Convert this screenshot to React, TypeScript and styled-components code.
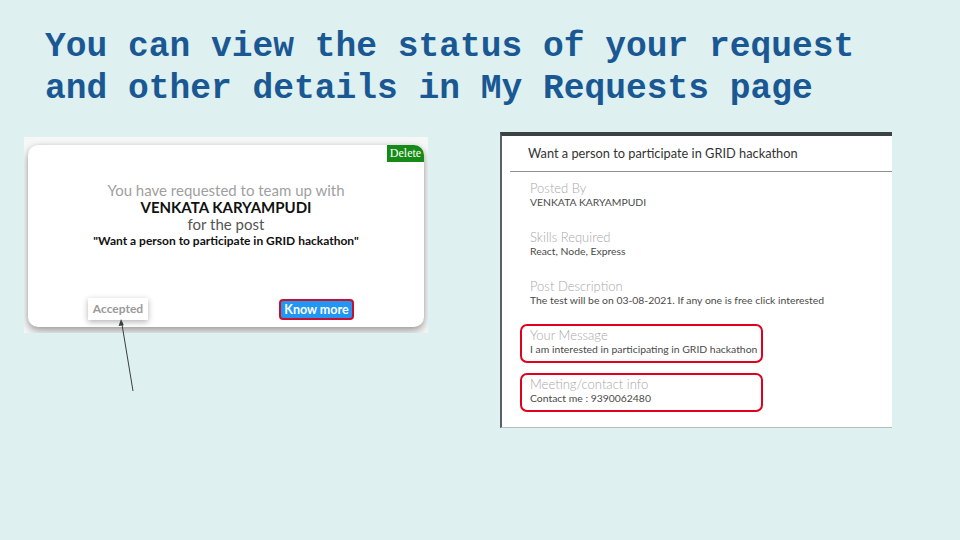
import React from "react";
import styled, { createGlobalStyle } from "styled-components";

const GlobalStyle = createGlobalStyle`
  html, body {
    margin: 0;
    padding: 0;
    background: #def0f0;
  }
  body {
    width: 960px;
    height: 540px;
    overflow: hidden;
    font-family: Lato, "Open Sans", sans-serif;
  }
`;

const Slide = styled.div`
  position: relative;
  width: 960px;
  height: 540px;
  background: #def0f0;
`;

const Title = styled.h1`
  margin: 0;
  padding: 26px 0 0 45px;
  font-family: "Liberation Mono", "Courier New", monospace;
  font-weight: bold;
  font-size: 34.6px;
  line-height: 42px;
  color: #1a5893;
  white-space: pre;
`;

const Row = styled.div`
  display: flex;
  align-items: flex-start;
  gap: 72px;
  padding: 22px 0 0 24px;
`;

/* ---- left screenshot ---- */

const Shot = styled.div`
  margin-top: 5px;
  width: 404px;
  box-sizing: border-box;
  padding: 8px 4px 6px 4px;
  background: #f6f7f7;
  overflow: hidden;
`;

const RequestCard = styled.div`
  display: flex;
  flex-direction: column;
  height: 182px;
  background: #fff;
  border-radius: 10px;
  box-shadow: 0 4px 8px rgba(0, 0, 0, 0.35), 0 0 4px rgba(0, 0, 0, 0.08);
  overflow: hidden;
`;

const CardTop = styled.div`
  display: flex;
  justify-content: flex-end;
`;

const DeleteButton = styled.div`
  width: 37px;
  height: 17px;
  background: #158a16;
  color: #fff;
  font-family: "Liberation Serif", "Times New Roman", serif;
  font-size: 12px;
  line-height: 17px;
  text-align: center;
`;

const Message = styled.div`
  margin-top: 19px;
  display: flex;
  flex-direction: column;
  align-items: center;
  text-align: center;
`;

const Line = styled.div<{ $size: number; $height: number; $color: string; $bold?: boolean }>`
  font-size: ${({ $size }) => $size}px;
  line-height: ${({ $height }) => $height}px;
  color: ${({ $color }) => $color};
  font-weight: ${({ $bold }) => ($bold ? 700 : 400)};
  white-space: nowrap;
`;

const Actions = styled.div`
  margin-top: auto;
  display: flex;
  justify-content: space-between;
  align-items: center;
  padding: 0 70px 7px 60px;
`;

const Status = styled.div`
  width: 60px;
  height: 22px;
  background: #fff;
  box-shadow: 0 2px 6px rgba(0, 0, 0, 0.3);
  color: #9a9a9a;
  font-size: 12px;
  font-weight: 700;
  line-height: 22px;
  text-align: center;
`;

const KnowMore = styled.div`
  width: 75px;
  height: 21px;
  box-sizing: border-box;
  background: #2196f3;
  border: 2px solid #c8102e;
  border-radius: 4px;
  color: #fff;
  font-size: 12.5px;
  font-weight: 700;
  line-height: 17px;
  text-align: center;
`;

/* ---- right screenshot ---- */

const Details = styled.div`
  width: 392px;
  box-sizing: border-box;
  background: #fff;
  border-top: 4px solid #3b4342;
  border-left: 2px solid #5a5f5f;
  border-bottom: 1px solid #b9bcbc;
  padding-bottom: 15px;
`;

const DetailsHeader = styled.div`
  height: 35px;
  margin-left: 8px;
  padding-left: 18px;
  border-bottom: 1px solid #8f9292;
  color: #333;
  font-size: 12.8px;
  line-height: 35px;
  white-space: nowrap;
`;

const Fields = styled.div`
  display: flex;
  flex-direction: column;
  gap: 10px;
  padding: 5px 0 0 18px;
`;

const Field = styled.div<{ $marked?: boolean }>`
  width: 243px;
  height: 39px;
  box-sizing: border-box;
  padding: 2px 8px 5px 8px;
  border: 2px solid ${({ $marked }) => ($marked ? "#e0001b" : "transparent")};
  border-radius: 7px;
`;

const FieldLabel = styled.div`
  font-size: 13px;
  font-weight: 300;
  line-height: 14px;
  color: #a8a8a8;
  white-space: nowrap;
`;

const FieldValue = styled.div`
  font-size: 10.4px;
  font-weight: 400;
  line-height: 14px;
  color: #4a4a4a;
  white-space: nowrap;
`;

/* annotation arrow drawn over the slide */
const Pointer = styled.svg`
  position: absolute;
  left: 110px;
  top: 312px;
`;

const fields = [
  { label: "Posted By", value: "VENKATA KARYAMPUDI" },
  { label: "Skills Required", value: "React, Node, Express" },
  {
    label: "Post Description",
    value: "The test will be on 03-08-2021. If any one is free click interested",
  },
  { label: "Your Message", value: "I am interested in participating in GRID hackathon", marked: true },
  { label: "Meeting/contact info", value: "Contact me : 9390062480", marked: true },
];

export default function App() {
  return (
    <Slide>
      <GlobalStyle />
      <Title>{"You can view the status of your request\nand other details in My Requests page"}</Title>
      <Row>
        <Shot>
          <RequestCard>
            <CardTop>
              <DeleteButton>Delete</DeleteButton>
            </CardTop>
            <Message>
              <Line $size={15} $height={18} $color="#9f9f9f">
                You have requested to team up with
              </Line>
              <Line $size={15} $height={17} $color="#111" $bold>
                VENKATA KARYAMPUDI
              </Line>
              <Line $size={15} $height={16} $color="#555">
                for the post
              </Line>
              <Line $size={12} $height={18} $color="#111" $bold>
                "Want a person to participate in GRID hackathon"
              </Line>
            </Message>
            <Actions>
              <Status>Accepted</Status>
              <KnowMore>Know more</KnowMore>
            </Actions>
          </RequestCard>
        </Shot>
        <Details>
          <DetailsHeader>Want a person to participate in GRID hackathon</DetailsHeader>
          <Fields>
            {fields.map((f) => (
              <Field key={f.label} $marked={f.marked}>
                <FieldLabel>{f.label}</FieldLabel>
                <FieldValue>{f.value}</FieldValue>
              </Field>
            ))}
          </Fields>
        </Details>
      </Row>
      <Pointer width="30" height="85" viewBox="0 0 30 85">
        <line x1="23" y1="79" x2="11.6" y2="10" stroke="#3a3f3f" strokeWidth="1" />
        <polygon points="11,7 8.6,14 13.8,13.2" fill="#3a3f3f" />
      </Pointer>
    </Slide>
  );
}
